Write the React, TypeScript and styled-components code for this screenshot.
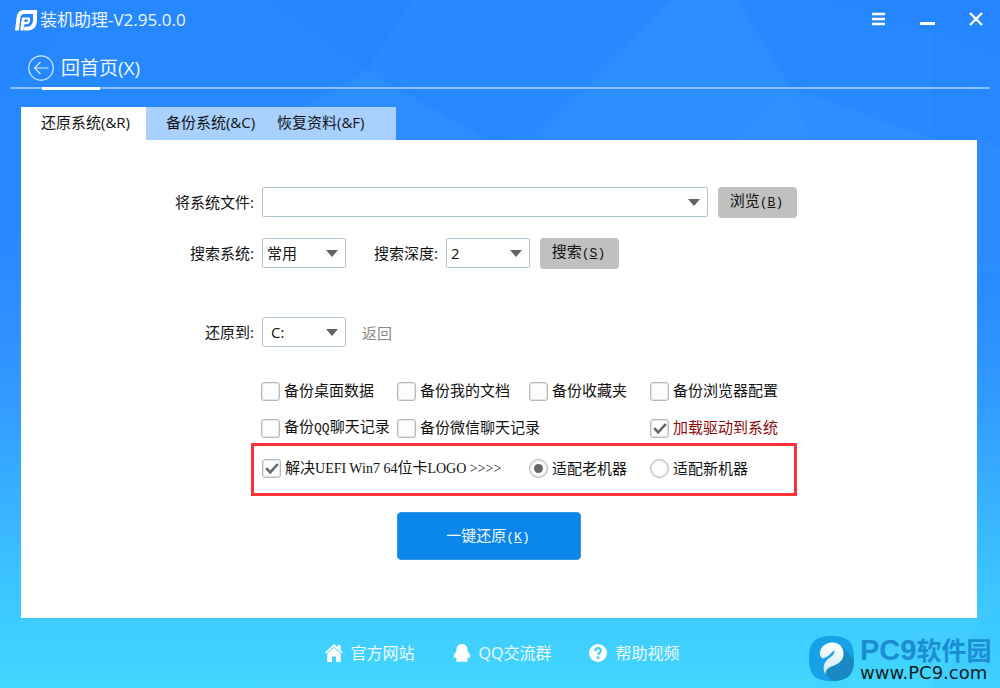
import React from "react";
import styled, { createGlobalStyle } from "styled-components";

const GlobalStyle = createGlobalStyle`
  *, *::before, *::after { box-sizing: border-box; }
  body {
    margin: 0;
    font-family: "Open Sans", "Noto Sans CJK SC", sans-serif;
    font-size: 15px;
    color: #111;
  }
  button, input, select { font: inherit; color: inherit; margin: 0; }
`;

const Window = styled.div`
  position: relative;
  display: flex;
  flex-direction: column;
  min-height: 100vh;
  background: linear-gradient(
    #2688ff 0%, #2688ff 36%, #2c8fff 46%, #309aff 57%,
    #36a9ff 67%, #3abdff 80%, #3ecbff 90%, #42d7ff 100%
  );
`;

const Facets = styled.svg`
  position: absolute;
  inset: 0;
  width: 100%;
  height: 100%;
  pointer-events: none;
`;

const TitleBar = styled.header`
  position: relative;
  display: flex;
  align-items: center;
  height: 40px;
  padding: 0 15px;
  color: #eef6ff;
`;

const AppName = styled.h1`
  flex: 1;
  margin: 0 0 0 3px;
  font-size: 17px;
  font-weight: 400;
  line-height: 24px;
`;

const WindowControls = styled.div`
  display: flex;
  gap: 32px;
`;

const IconButton = styled.button`
  display: flex;
  padding: 0;
  border: 0;
  background: none;
  color: #fff;
  cursor: pointer;
`;

const Nav = styled.nav`
  position: relative;
  display: flex;
  height: 49px;
  margin: 0 10px;
  padding: 14px 18px 0;
  border-bottom: 2px solid rgba(255, 255, 255, 0.45);

  &::after {
    content: "";
    position: absolute;
    left: 32px;
    bottom: -3px;
    width: 58px;
    height: 3px;
    background: #fff;
  }
`;

const BackLink = styled.a`
  display: flex;
  align-items: center;
  gap: 7px;
  height: 28px;
  color: #eef6ff;
  font-size: 19px;
  line-height: 28px;
  text-decoration: none;
`;

const Main = styled.main`
  position: relative;
  flex: 1;
  display: flex;
  flex-direction: column;
  margin: 18px 23px 0 21px;
`;

const Tabs = styled.div`
  display: flex;
`;

const Tab = styled.button<{ $align?: "center" | "left" }>`
  width: 125px;
  height: 33px;
  padding: ${(p) => (p.$align === "left" ? "0 0 4px 6px" : "0 0 4px 4px")};
  border: 0;
  background: #a8d1ff;
  text-align: ${(p) => p.$align ?? "center"};
  line-height: 20px;
  cursor: pointer;

  &[aria-selected="true"] { background: #fff; }
`;

const Panel = styled.form`
  flex: 1;
  padding: 46px 180px 24px 153px;
  background: #fff;
`;

const Row = styled.div<{ $top?: number }>`
  display: flex;
  align-items: center;
  height: 32px;
  margin-top: ${(p) => p.$top ?? 0}px;
`;

const FieldLabel = styled.label<{ $inline?: boolean }>`
  width: ${(p) => (p.$inline ? "92px" : "80px")};
  margin-right: 8px;
  text-align: right;
  line-height: 20px;
  white-space: nowrap;
`;

const SelectWrap = styled.div<{ $grow?: boolean }>`
  position: relative;
  flex: ${(p) => (p.$grow ? "1" : "0 0 84px")};
  display: flex;

  svg {
    position: absolute;
    right: 8px;
    top: 12px;
    pointer-events: none;
  }
`;

const SelectBox = styled.select<{ $inset?: boolean }>`
  appearance: none;
  width: 100%;
  height: 30px;
  padding: 0 24px 1px ${(p) => (p.$inset ? 8 : 4)}px;
  border: 1px solid #aec4d0;
  border-radius: 2px;
  background: #fff;
  line-height: 20px;
`;

const GrayButton = styled.button`
  width: 79px;
  height: 31px;
  margin-left: 10px;
  padding: 0 2px 1px 0;
  border: 0;
  border-radius: 4px;
  background: #c0c0c0;
  line-height: 20px;
  cursor: pointer;
`;

const Latin = styled.span`
  font-family: "Liberation Mono", monospace;
  font-size: 13px;
`;

const SerifLatin = styled.span`
  font-family: "Liberation Serif", serif;
  font-size: 14px;
`;

const ReturnLink = styled.a`
  margin-left: 16px;
  padding-top: 2px;
  color: #8a8a8a;
  line-height: 20px;
  text-decoration: none;
`;

const OptionGrid = styled.div`
  display: grid;
  grid-template-columns: 136px 132px 121px auto;
  row-gap: 17px;
  margin: 33px 0 0 87px;
`;

const HighlightBox = styled.div`
  display: grid;
  grid-template-columns: 267px 121px auto;
  align-items: center;
  height: 53px;
  margin: 5px 0 0 77px;
  padding: 0 8px 2px;
  border: 3px solid #fa3238;
`;

const Option = styled.label<{ $red?: boolean; $column?: number }>`
  display: flex;
  align-items: center;
  gap: 4px;
  height: 20px;
  grid-column: ${(p) => p.$column ?? "auto"};
  color: ${(p) => (p.$red ? "#8c0a0a" : "inherit")};
  line-height: 20px;
  white-space: nowrap;
`;

const OptionText = styled.span`
  padding-bottom: 2px;
`;

const BoxWrap = styled.span`
  position: relative;
  display: flex;

  svg {
    position: absolute;
    left: 3px;
    top: 3px;
    pointer-events: none;
    display: none;
  }
  input:checked + svg { display: block; }
`;

const Tick = styled.input`
  appearance: none;
  width: 19px;
  height: 19px;
  border: 1px solid #b8b8b8;
  border-radius: ${(p) => (p.type === "radio" ? "50%" : "3px")};
  background: #fdfdfd;
  box-shadow: inset 0 0 1px 1px #e4e4e4;
`;

const RadioTick = styled(Tick)`
  display: grid;
  place-items: center;

  &:checked::before {
    content: "";
    width: 9px;
    height: 9px;
    border-radius: 50%;
    background: #666;
  }
`;

const PrimaryButton = styled.button`
  display: block;
  width: 184px;
  height: 48px;
  margin: 16px 0 0 223px;
  padding: 0 2px 0 0;
  border: 1px solid #2f97ea;
  border-radius: 4px;
  background: #0b87eb;
  color: #f2f9ff;
  line-height: 20px;
  cursor: pointer;
`;

const Footer = styled.footer`
  position: relative;
  display: flex;
  justify-content: center;
  align-items: center;
  gap: 38px;
  height: 70px;
  padding: 0 0 0 4px;
`;

const FooterLink = styled.a`
  display: flex;
  align-items: center;
  gap: 8px;
  color: #f0faff;
  font-size: 16px;
  line-height: 24px;
  text-decoration: none;

  svg { color: #fff; }
`;

const Watermark = styled.div`
  position: absolute;
  right: 8px;
  bottom: 7px;
  display: flex;
  align-items: center;
  gap: 6px;
`;

const BrandText = styled.div`
  width: 132px;
  white-space: nowrap;
`;

const BrandName = styled.div`
  height: 29px;
  color: #1b8dd3;
  font-family: "Liberation Sans", "Noto Sans CJK SC", sans-serif;
  font-size: 25px;
  font-weight: 700;
  line-height: 28px;

  b { font-size: 29px; }
`;

const BrandUrl = styled.div`
  height: 16px;
  color: #101c24;
  font-family: "DejaVu Sans", sans-serif;
  font-size: 18px;
  line-height: 16px;
`;

const Caret = () => (
  <svg width="12" height="7" viewBox="0 0 12 7" aria-hidden="true">
    <path d="M0 0H12L6 7Z" fill="#606366" />
  </svg>
);

type SelectProps = {
  id: string;
  options: string[];
  grow?: boolean;
  inset?: boolean;
};

const Select = ({ id, options, grow, inset }: SelectProps) => (
  <SelectWrap $grow={grow}>
    <SelectBox id={id} $inset={inset}>
      {options.map((o) => (
        <option key={o}>{o}</option>
      ))}
    </SelectBox>
    <Caret />
  </SelectWrap>
);

type CheckProps = {
  children: React.ReactNode;
  checked?: boolean;
  red?: boolean;
  column?: number;
};

const Check = ({ children, checked, red, column }: CheckProps) => (
  <Option $red={red} $column={column}>
    <BoxWrap>
      <Tick type="checkbox" defaultChecked={checked} />
      <svg width="14" height="13" viewBox="0 0 14 13" aria-hidden="true">
        <path d="M1.2 6.2L5.2 10.4L12.8 2" fill="none" stroke="#666" strokeWidth="2.6" />
      </svg>
    </BoxWrap>
    <OptionText>{children}</OptionText>
  </Option>
);

const Radio = ({ children, checked }: CheckProps) => (
  <Option>
    <RadioTick type="radio" name="machine" defaultChecked={checked} />
    <OptionText>{children}</OptionText>
  </Option>
);

const Shortcut = ({ letter }: { letter: string }) => (
  <Latin>
    (<u>{letter}</u>)
  </Latin>
);

export default function App() {
  return (
    <Window>
      <GlobalStyle />
      <Facets viewBox="0 0 1000 688" preserveAspectRatio="none" aria-hidden="true">
        <path d="M270 0H413L368 70L300 20Z" fill="#1f7cff" opacity=".15" />
        <path d="M0 0H90L0 100Z" fill="#1f7cff" opacity=".12" />
        <path d="M413 0H738L660 12L535 140H510L368 70Z" fill="#2f95ff" opacity=".2" />
        <path d="M368 70L487 140H240Z" fill="#3e9cff" opacity=".25" />
        <path d="M672 0H738L791 88L735 140H535Z" fill="#3e9cff" opacity=".25" />
        <path d="M791 88L735 140H810Z" fill="#52a6ff" opacity=".25" />
        <path d="M791 88L932 30V135Z" fill="#379aff" opacity=".15" />
        <path d="M791 88L938 140H810Z" fill="#459fff" opacity=".25" />
        <path d="M830 0H1000V54L932 30Z" fill="#1f7cff" opacity=".2" />
        <path d="M0 240L22 230V420H0Z" fill="#4b9fff" opacity=".08" />
        <path d="M977 135L1000 150V270L977 275Z" fill="#4b9fff" opacity=".15" />
        <path d="M930 688L1000 600V688Z" fill="#35bfff" opacity=".25" />
      </Facets>

      <TitleBar>
        <svg width="22" height="21" viewBox="0 0 22 21" aria-hidden="true">
          <path
            d="M0 20.500L1.600 7.500C2.300 2.500 4.500 0 9.500 0H22V9.500C22 16.500 19 20.500 12.500 20.500H8.800L9.400 16.800H11.800C15.800 16.800 18 14 18 9.500V4H10C7 4 5.800 5 5.300 8.300L3.800 20.500Z"
            fill="#fff"
          />
          <path
            d="M7.200 7.500H15V10.200C15 12.800 13.800 14.200 11.200 14.200H9.400L8.500 20.500H5.300L6.200 12.500ZM9.500 9.500V12H11.200C12.200 12 12.700 11.400 12.700 10.400V9.500Z"
            fill="#fff"
            fillRule="evenodd"
          />
        </svg>
        <AppName>装机助理-V2.95.0.0</AppName>
        <WindowControls>
          <IconButton type="button" aria-label="菜单">
            <svg width="17" height="16" viewBox="0 0 17 16">
              <path d="M2 2H15M2 7H15M2 12H15" stroke="currentColor" strokeWidth="2.500" />
            </svg>
          </IconButton>
          <IconButton type="button" aria-label="最小化">
            <svg width="17" height="16" viewBox="0 0 17 16">
              <path d="M1 11.500H16" stroke="currentColor" strokeWidth="3" />
            </svg>
          </IconButton>
          <IconButton type="button" aria-label="关闭">
            <svg width="17" height="16" viewBox="0 0 17 16">
              <path d="M2 1L14 13M14 1L2 13" stroke="currentColor" strokeWidth="2.400" />
            </svg>
          </IconButton>
        </WindowControls>
      </TitleBar>

      <Nav>
        <BackLink href="#home">
          <svg width="26" height="26" viewBox="0 0 26 26" fill="none" stroke="#d8eaff" aria-hidden="true">
            <circle cx="13" cy="13" r="12.200" strokeWidth="1.200" />
            <path d="M20.500 13H6.500M12.500 7L6.500 13L12.500 19" strokeWidth="1.200" />
          </svg>
          回首页(X)
        </BackLink>
      </Nav>

      <Main>
        <Tabs role="tablist">
          <Tab type="button" role="tab" aria-selected="true">还原系统(&amp;R)</Tab>
          <Tab type="button" role="tab" aria-selected="false">备份系统(&amp;C)</Tab>
          <Tab type="button" role="tab" aria-selected="false" $align="left">恢复资料(&amp;F)</Tab>
        </Tabs>

        <Panel onSubmit={(e) => e.preventDefault()}>
          <Row>
            <FieldLabel htmlFor="file">将系统文件:</FieldLabel>
            <Select id="file" options={[""]} grow />
            <GrayButton type="button">浏览<Shortcut letter="B" /></GrayButton>
          </Row>
          <Row $top={19}>
            <FieldLabel htmlFor="kind">搜索系统:</FieldLabel>
            <Select id="kind" options={["常用"]} />
            <FieldLabel htmlFor="depth" $inline>搜索深度:</FieldLabel>
            <Select id="depth" options={["2"]} />
            <GrayButton type="button">搜索<Shortcut letter="S" /></GrayButton>
          </Row>
          <Row $top={47}>
            <FieldLabel htmlFor="target">还原到:</FieldLabel>
            <Select id="target" options={["C:"]} inset />
            <ReturnLink href="#back">返回</ReturnLink>
          </Row>

          <OptionGrid>
            <Check>备份桌面数据</Check>
            <Check>备份我的文档</Check>
            <Check>备份收藏夹</Check>
            <Check>备份浏览器配置</Check>
            <Check>备份<Latin>QQ</Latin>聊天记录</Check>
            <Check>备份微信聊天记录</Check>
            <Check checked red column={4}>加载驱动到系统</Check>
          </OptionGrid>

          <HighlightBox>
            <Check checked>
              解决<SerifLatin>UEFI Win7 64</SerifLatin>位卡<SerifLatin>LOGO &gt;&gt;&gt;&gt;</SerifLatin>
            </Check>
            <Radio checked>适配老机器</Radio>
            <Radio>适配新机器</Radio>
          </HighlightBox>

          <PrimaryButton type="submit">一键还原<Shortcut letter="K" /></PrimaryButton>
        </Panel>
      </Main>

      <Footer>
        <FooterLink href="#site">
          <svg width="18" height="18" viewBox="0 0 18 18" fill="currentColor" aria-hidden="true">
            <path d="M9 0L12.500 3.300V1H15.500V6L18 8.500L17 9.500L9 2.800L1 9.500L0 8.500Z" />
            <path d="M2.300 9.300L9 3.700L15.700 9.300V18H11V12.500H7V18H2.300Z" />
          </svg>
          官方网站
        </FooterLink>
        <FooterLink href="#qq">
          <svg width="18" height="18" viewBox="0 0 18 18" fill="currentColor" aria-hidden="true">
            <path d="M9 0C12.600 0 14.500 2.600 14.500 5.600V7.200C16.500 9 17.600 11.500 17.300 13.200C17 14.200 15.900 13.800 15.300 13.200C15 14.200 14.500 15 13.900 15.600C14.700 16 15 16.500 14.800 17.100C14.200 18.300 10.300 18.100 9 17.200C7.700 18.100 3.800 18.300 3.200 17.100C3 16.500 3.300 16 4.100 15.600C3.500 15 3 14.200 2.700 13.200C2.100 13.800 1 14.200 .7 13.200C.4 11.500 1.500 9 3.500 7.200V5.600C3.500 2.600 5.400 0 9 0Z" />
          </svg>
          QQ交流群
        </FooterLink>
        <FooterLink href="#help">
          <svg width="18" height="18" viewBox="0 0 18 18" aria-hidden="true">
            <circle cx="9" cy="9" r="9" fill="currentColor" />
            <path d="M6.200 7C6.200 3.300 11.900 3.300 11.900 6.700C11.900 8.900 9.200 8.700 9.200 11.100" fill="none" stroke="#42ccfb" strokeWidth="2.200" />
            <rect x="8" y="12.500" width="2.400" height="2.400" fill="#42ccfb" />
          </svg>
          帮助视频
        </FooterLink>

        <Watermark>
          <svg width="45" height="45" viewBox="0 0 45 45" aria-hidden="true">
            <defs>
              <clipPath id="badge">
                <path d="M22.500 0C39 0 45 6 45 22.500S39 45 22.500 45S0 39 0 22.500S6 0 22.500 0Z" />
              </clipPath>
              <linearGradient id="leaf" x1="0" y1="0" x2="0" y2="1">
                <stop offset="0" stopColor="#fff" />
                <stop offset="1" stopColor="#cfeafa" />
              </linearGradient>
            </defs>
            <g clipPath="url(#badge)">
              <rect width="45" height="45" fill="#17a2e8" />
              <path d="M32 10L46 24V46H25L15 37Z" fill="#1989c4" />
            </g>
            <path
              d="M23 6.500C30 6 35 11.500 34.500 18.500C34 26 28 28.500 22.500 30.500C18.500 32 16.500 34.500 16.500 38.500C13.800 33.500 13.800 28 18.500 23.500C21 21.200 25.500 19.500 25.500 14.500C22.500 15.500 22 18 19 20C17.300 21.200 15.500 22 14 22.500C11.500 21.500 10.500 19 11 16C11.800 10.500 16.500 7 23 6.500Z"
              fill="url(#leaf)"
            />
          </svg>
          <BrandText>
            <BrandName><b>PC9</b>软件园</BrandName>
            <BrandUrl>www.PC9.com</BrandUrl>
          </BrandText>
        </Watermark>
      </Footer>
    </Window>
  );
}
